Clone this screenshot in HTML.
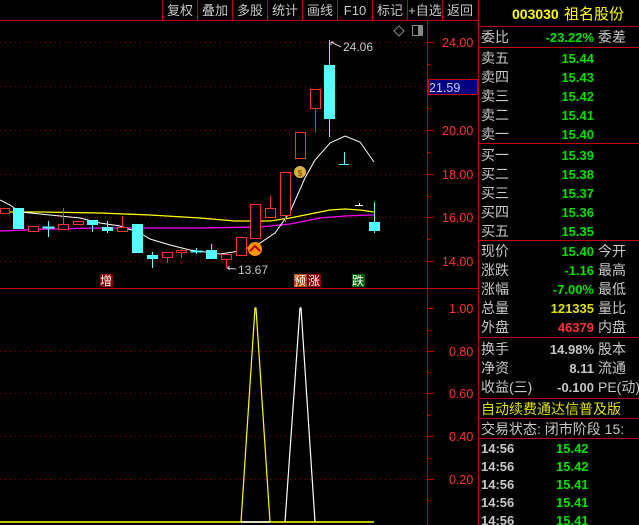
<!DOCTYPE html>
<html><head><meta charset="utf-8"><style>
html,body{margin:0;padding:0;background:#000;width:639px;height:525px;overflow:hidden}
svg{display:block}
text{font-family:"Liberation Sans","Noto Sans CJK SC",sans-serif}
</style></head><body>
<svg width="639" height="525" viewBox="0 0 639 525" xmlns="http://www.w3.org/2000/svg">
<rect width="639" height="525" fill="#000"/>
<!-- toolbar -->
<g stroke="#c00000" stroke-width="1">
<line x1="0" y1="20.5" x2="478" y2="20.5"/>
<line x1="162.5" y1="0" x2="162.5" y2="20"/><line x1="197.5" y1="0" x2="197.5" y2="20"/>
<line x1="232.5" y1="0" x2="232.5" y2="20"/><line x1="267.5" y1="0" x2="267.5" y2="20"/>
<line x1="302.5" y1="0" x2="302.5" y2="20"/><line x1="337.5" y1="0" x2="337.5" y2="20"/>
<line x1="372.5" y1="0" x2="372.5" y2="20"/><line x1="407.5" y1="0" x2="407.5" y2="20"/>
<line x1="442.5" y1="0" x2="442.5" y2="20"/>
</g>
<g fill="#c8c8c8" font-size="13" text-anchor="middle">
<text x="180" y="15">复权</text><text x="215" y="15">叠加</text><text x="250" y="15">多股</text>
<text x="285" y="15">统计</text><text x="320" y="15">画线</text><text x="355" y="15">F10</text>
<text x="390" y="15">标记</text><text x="425" y="15">+自选</text><text x="460" y="15">返回</text>
</g>
<!-- axes -->
<line x1="427.5" y1="21" x2="427.5" y2="525" stroke="#c00000"/>
<line x1="478.5" y1="0" x2="478.5" y2="525" stroke="#c00000"/>
<line x1="0" y1="288.5" x2="478" y2="288.5" stroke="#c00000"/>
<!-- grid upper -->
<g stroke="#a00000" stroke-dasharray="1,4">
<line x1="0" y1="42.5" x2="427" y2="42.5"/><line x1="0" y1="86.5" x2="427" y2="86.5"/>
<line x1="0" y1="130.5" x2="427" y2="130.5"/><line x1="0" y1="174.5" x2="427" y2="174.5"/>
<line x1="0" y1="217.5" x2="427" y2="217.5"/><line x1="0" y1="261.5" x2="427" y2="261.5"/>
<line x1="0" y1="351.5" x2="427" y2="351.5"/><line x1="0" y1="393.5" x2="427" y2="393.5"/>
<line x1="0" y1="436.5" x2="427" y2="436.5"/><line x1="0" y1="479.5" x2="427" y2="479.5"/>
</g>
<g stroke="#c00000">
<line x1="428" y1="42.5" x2="434" y2="42.5"/><line x1="428" y1="64.5" x2="431" y2="64.5"/>
<line x1="428" y1="108.5" x2="431" y2="108.5"/><line x1="428" y1="130.5" x2="434" y2="130.5"/>
<line x1="428" y1="152.5" x2="431" y2="152.5"/><line x1="428" y1="174.5" x2="434" y2="174.5"/>
<line x1="428" y1="196.5" x2="431" y2="196.5"/><line x1="428" y1="217.5" x2="434" y2="217.5"/>
<line x1="428" y1="239.5" x2="431" y2="239.5"/><line x1="428" y1="261.5" x2="434" y2="261.5"/>
<line x1="428" y1="308.5" x2="434" y2="308.5"/><line x1="428" y1="330.5" x2="431" y2="330.5"/>
<line x1="428" y1="351.5" x2="434" y2="351.5"/><line x1="428" y1="372.5" x2="431" y2="372.5"/>
<line x1="428" y1="393.5" x2="434" y2="393.5"/><line x1="428" y1="415.5" x2="431" y2="415.5"/>
<line x1="428" y1="436.5" x2="434" y2="436.5"/><line x1="428" y1="458.5" x2="431" y2="458.5"/>
<line x1="428" y1="479.5" x2="434" y2="479.5"/><line x1="428" y1="500.5" x2="431" y2="500.5"/>
</g>
<g fill="#ff3232" font-size="12.5">
<text x="442" y="47">24.00</text><text x="442" y="135">20.00</text><text x="442" y="179">18.00</text>
<text x="442" y="222">16.00</text><text x="442" y="266">14.00</text>
<text x="449" y="313">1.00</text><text x="449" y="356">0.80</text><text x="449" y="398">0.60</text>
<text x="449" y="441">0.40</text><text x="449" y="484">0.20</text>
</g>
<rect x="428.5" y="79.5" width="49" height="15" fill="#000080" stroke="#c00000"/>
<text x="429" y="92" fill="#c8c8ff" font-size="12.5">21.59</text>
<!-- icons -->
<path d="M399 26 L404 31 L399 36 L394 31 Z" fill="none" stroke="#888"/>
<rect x="412.5" y="25.5" width="10" height="10" fill="none" stroke="#888"/><rect x="418" y="26" width="4" height="9" fill="#888"/>
<!-- MA lines -->
<polyline fill="none" stroke="#ffff00" stroke-width="1.3" points="0,212 40,212 100,213 150,215 200,218 235,221 270,221 290,218 310,214 330,210 345,209 360,210 374,212"/>
<polyline fill="none" stroke="#ff00ff" stroke-width="1.3" points="0,231 50,229 100,228 200,228 260,227 290,224 320,218 345,216 370,215 374,215"/>
<polyline fill="none" stroke="#fff" stroke-width="1" points="0,200 10,205 20,212 40,214 60,216 80,218 100,223 120,226 140,233 150,239 170,245 190,250 220,254 240,251 260,243 275,233 290,212 305,178 315,160 330,143 345,136 360,142 374,162"/>
<!-- candles -->
<g stroke="#ff3232" fill="#000">
<rect x="0.5" y="208.5" width="9" height="5"/>
<rect x="28.5" y="226.5" width="10" height="5"/>
<line x1="63.5" y1="208" x2="63.5" y2="224"/><rect x="58.5" y="224.5" width="10" height="5"/>
<rect x="73.5" y="221.5" width="10" height="3"/>
<line x1="122.5" y1="216" x2="122.5" y2="227"/><rect x="117.5" y="227.5" width="10" height="4"/>
<line x1="167.5" y1="257" x2="167.5" y2="263"/><rect x="162.5" y="252.5" width="10" height="5"/>
<line x1="181.5" y1="248" x2="181.5" y2="258"/><rect x="176.5" y="250.5" width="10" height="2"/>
<line x1="226.5" y1="259" x2="226.5" y2="268"/><rect x="221.5" y="254.5" width="10" height="5"/>
<rect x="236.5" y="237.5" width="10" height="18"/>
<rect x="250.5" y="204.5" width="10" height="34"/>
<line x1="270.5" y1="196" x2="270.5" y2="208"/><rect x="265.5" y="208.5" width="10" height="9"/>
<rect x="280.5" y="172.5" width="10" height="43"/><line x1="285.5" y1="216" x2="285.5" y2="222"/>
<rect x="295.5" y="132.5" width="10" height="26"/>
<line x1="315.5" y1="108" x2="315.5" y2="132"/><rect x="310.5" y="89.5" width="10" height="19"/>
</g>
<g fill="#54ffff" stroke="#54ffff">
<rect x="13.5" y="208.5" width="10" height="20"/>
<line x1="48.5" y1="221" x2="48.5" y2="237"/><rect x="43" y="227" width="11" height="1"/>
<rect x="87.5" y="220.5" width="10" height="4"/><line x1="92.5" y1="225" x2="92.5" y2="232"/>
<line x1="107.5" y1="221" x2="107.5" y2="233"/><rect x="102.5" y="227.5" width="10" height="3"/>
<rect x="132.5" y="224.5" width="10" height="28"/>
<line x1="152.5" y1="252" x2="152.5" y2="268"/><rect x="147.5" y="255.5" width="10" height="3"/>
<line x1="196.5" y1="248" x2="196.5" y2="254"/><rect x="191" y="251" width="11" height="1"/>
<line x1="211.5" y1="244" x2="211.5" y2="250"/><rect x="206.5" y="250.5" width="10" height="8"/>
<line x1="329.5" y1="40" x2="329.5" y2="137"/><rect x="324.5" y="65.5" width="10" height="53"/>
<line x1="344.5" y1="152" x2="344.5" y2="164"/><line x1="339" y1="164.5" x2="349" y2="164.5"/>
<line x1="374.5" y1="202" x2="374.5" y2="233"/><rect x="369.5" y="222.5" width="10" height="8"/>
</g>
<line x1="355" y1="205.5" x2="363" y2="205.5" stroke="#fff"/><line x1="359.5" y1="203" x2="359.5" y2="205" stroke="#fff"/>
<!-- labels -->
<g fill="#c8c8c8" font-size="12">
<path d="M331 42 L331 45 M331 42 L334 42 M331 42 L341 47" stroke="#c8c8c8" fill="none"/>
<text x="343" y="51">24.06</text>
<path d="M227 268 L236 269 M227 268 L230 266 M227 268 L230 270" stroke="#c8c8c8" fill="none"/>
<text x="238" y="274">13.67</text>
</g>
<circle cx="300" cy="172" r="6" fill="#d8b040"/><text x="300" y="176" fill="#604000" font-size="8" text-anchor="middle">$</text>
<circle cx="255" cy="249" r="7" fill="#ff9000"/><path d="M250 251 L255 246 L260 251" stroke="#b00000" stroke-width="2" fill="none"/>
<g font-size="12">
<rect x="100" y="274" width="13" height="13" fill="#8b0000"/><text x="100" y="285" fill="#fff">增</text>
<rect x="294" y="274" width="13" height="13" fill="#c04000"/><text x="294" y="285" fill="#fff">预</text>
<rect x="308" y="274" width="13" height="13" fill="#8b0000"/><text x="308" y="285" fill="#fff">涨</text>
<rect x="352" y="274" width="13" height="13" fill="#006000"/><text x="352" y="285" fill="#fff">跌</text>
</g>
<!-- lower pane -->
<polyline fill="none" stroke="#ffff00" stroke-width="1.2" points="241,522 255,308 256,308 270,522"/>
<polyline fill="none" stroke="#fff" stroke-width="1.2" points="285,522 300,308 301,308 315,522"/>
<line x1="0" y1="522" x2="374" y2="522" stroke="#ffff00" stroke-width="1.5"/>
<line x1="241" y1="522" x2="270" y2="522" stroke="#fff" stroke-width="1.5"/>
<!-- right panel -->
<g stroke="#c00000">
<line x1="479" y1="26.5" x2="639" y2="26.5"/><line x1="479" y1="47.5" x2="639" y2="47.5"/>
<line x1="479" y1="143.5" x2="639" y2="143.5"/><line x1="479" y1="240.5" x2="639" y2="240.5"/>
<line x1="479" y1="337.5" x2="639" y2="337.5"/><line x1="479" y1="398.5" x2="639" y2="398.5"/>
<line x1="479" y1="418.5" x2="639" y2="418.5"/><line x1="479" y1="438.5" x2="639" y2="438.5"/>
</g>
<text x="512" y="19" fill="#ffff00" font-size="14" font-weight="bold">003030</text>
<text x="564" y="19" fill="#ffff00" font-size="15">祖名股份</text>
<g font-size="14" fill="#c8c8c8">
<text x="481" y="42">委比</text><text x="598" y="42">委差</text>
<text x="481" y="63">卖五</text><text x="481" y="82">卖四</text><text x="481" y="101">卖三</text><text x="481" y="120">卖二</text><text x="481" y="139">卖一</text>
<text x="481" y="160">买一</text><text x="481" y="179">买二</text><text x="481" y="198">买三</text><text x="481" y="217">买四</text><text x="481" y="236">买五</text>
<text x="481" y="256">现价</text><text x="598" y="256">今开</text>
<text x="481" y="275">涨跌</text><text x="598" y="275">最高</text>
<text x="481" y="294">涨幅</text><text x="598" y="294">最低</text>
<text x="481" y="313">总量</text><text x="598" y="313">量比</text>
<text x="481" y="332">外盘</text><text x="598" y="332">内盘</text>
<text x="481" y="354">换手</text><text x="598" y="354">股本</text>
<text x="481" y="373">净资</text><text x="598" y="373">流通</text>
<text x="481" y="392">收益(三)</text><text x="598" y="392">PE(动)</text>
<text x="481" y="434">交易状态: 闭市阶段 15:</text>
</g>
<text x="481" y="414" fill="#e0e000" font-size="14">自动续费通达信普及版</text>
<g font-size="13" font-weight="bold" text-anchor="end">
<text x="594" y="42" fill="#00e000">-23.22%</text>
<g fill="#00e000">
<text x="594" y="63">15.44</text><text x="594" y="82">15.43</text><text x="594" y="101">15.42</text><text x="594" y="120">15.41</text><text x="594" y="139">15.40</text>
<text x="594" y="160">15.39</text><text x="594" y="179">15.38</text><text x="594" y="198">15.37</text><text x="594" y="217">15.36</text><text x="594" y="236">15.35</text>
<text x="594" y="256">15.40</text><text x="594" y="275">-1.16</text><text x="594" y="294">-7.00%</text>
</g>
<text x="594" y="313" fill="#e0e000">121335</text>
<text x="594" y="332" fill="#ff3232">46379</text>
<g fill="#c8c8c8"><text x="594" y="354">14.98%</text><text x="594" y="373">8.11</text><text x="594" y="392">-0.100</text></g>
</g>
<g font-size="13" font-weight="bold">
<g fill="#c8c8c8"><text x="481" y="453">14:56</text><text x="481" y="471">14:56</text><text x="481" y="489">14:56</text><text x="481" y="507">14:56</text><text x="481" y="525">14:56</text></g>
<g fill="#00e000"><text x="556" y="453">15.42</text><text x="556" y="471">15.42</text><text x="556" y="489">15.41</text><text x="556" y="507">15.41</text><text x="556" y="525">15.41</text></g>
</g>
</svg>
</body></html>
